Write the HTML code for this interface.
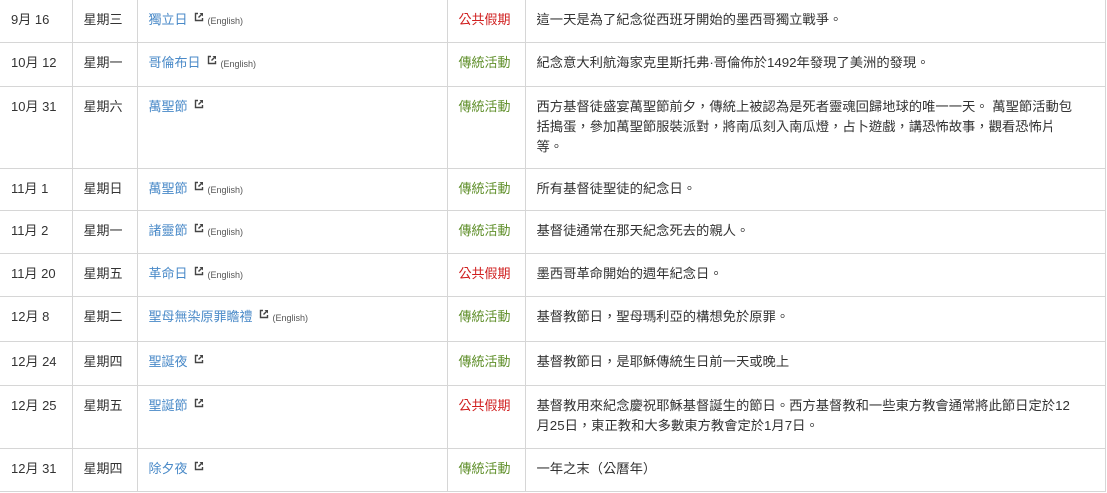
<!DOCTYPE html>
<html><head><meta charset="utf-8"><style>
body{margin:0;background:#fff;width:1107px;height:493px;overflow:hidden;font-family:"Liberation Sans","Noto Sans CJK TC",sans-serif;font-size:13px;color:#333}
table{border-collapse:collapse;position:absolute;left:0;top:-1px;table-layout:fixed;width:1105px}
td{border:1px solid #d6d6d6;padding:10px 11px 0 11px;vertical-align:top;line-height:20px;box-sizing:border-box}
td:first-child{border-left:none}
td:last-child{padding-right:26px;font-size:13.3px}
a{color:#4a8ac8;text-decoration:none}
svg.ext{width:10px;height:10px;margin-left:6px;vertical-align:2px}
.en{font-size:9px;color:#555;margin-left:4px}
.r{color:#d02020}.g{color:#5f8f2a}
</style></head><body>
<svg width="0" height="0" style="position:absolute"><defs><symbol id="e" viewBox="0 0 10 10"><path d="M4 1.5H1.5V8.5H8.5V6" fill="none" stroke="#444" stroke-width="1.4"/><path d="M5.5 1H9V4.5Z" fill="#444"/><path d="M8.5 1.5L4.5 5.5" stroke="#444" stroke-width="1.4"/></symbol></defs></svg>
<table>
<colgroup><col style="width:72px"><col style="width:65px"><col style="width:310px"><col style="width:78px"><col style="width:580px"></colgroup>
<tr style="height:43px"><td>9月 16</td><td>星期三</td><td><a>獨立日</a><svg class="ext"><use href="#e"/></svg><span class="en">(English)</span></td><td class="r">公共假期</td><td>這一天是為了紀念從西班牙開始的墨西哥獨立戰爭。</td></tr>
<tr style="height:44px"><td>10月 12</td><td>星期一</td><td><a>哥倫布日</a><svg class="ext"><use href="#e"/></svg><span class="en">(English)</span></td><td class="g">傳統活動</td><td>紀念意大利航海家克里斯托弗·哥倫佈於1492年發現了美洲的發現。</td></tr>
<tr style="height:82px"><td>10月 31</td><td>星期六</td><td><a>萬聖節</a><svg class="ext"><use href="#e"/></svg></td><td class="g">傳統活動</td><td>西方基督徒盛宴萬聖節前夕，傳統上被認為是死者靈魂回歸地球的唯一一天。 萬聖節活動包括搗蛋，參加萬聖節服裝派對，將南瓜刻入南瓜燈，占卜遊戲，講恐怖故事，觀看恐怖片等。</td></tr>
<tr style="height:42px"><td>11月 1</td><td>星期日</td><td><a>萬聖節</a><svg class="ext"><use href="#e"/></svg><span class="en">(English)</span></td><td class="g">傳統活動</td><td>所有基督徒聖徒的紀念日。</td></tr>
<tr style="height:43px"><td>11月 2</td><td>星期一</td><td><a>諸靈節</a><svg class="ext"><use href="#e"/></svg><span class="en">(English)</span></td><td class="g">傳統活動</td><td>基督徒通常在那天紀念死去的親人。</td></tr>
<tr style="height:43px"><td>11月 20</td><td>星期五</td><td><a>革命日</a><svg class="ext"><use href="#e"/></svg><span class="en">(English)</span></td><td class="r">公共假期</td><td>墨西哥革命開始的週年紀念日。</td></tr>
<tr style="height:45px"><td>12月 8</td><td>星期二</td><td><a>聖母無染原罪瞻禮</a><svg class="ext"><use href="#e"/></svg><span class="en">(English)</span></td><td class="g">傳統活動</td><td>基督教節日，聖母瑪利亞的構想免於原罪。</td></tr>
<tr style="height:44px"><td>12月 24</td><td>星期四</td><td><a>聖誕夜</a><svg class="ext"><use href="#e"/></svg></td><td class="g">傳統活動</td><td>基督教節日，是耶穌傳統生日前一天或晚上</td></tr>
<tr style="height:63px"><td>12月 25</td><td>星期五</td><td><a>聖誕節</a><svg class="ext"><use href="#e"/></svg></td><td class="r">公共假期</td><td>基督教用來紀念慶祝耶穌基督誕生的節日。西方基督教和一些東方教會通常將此節日定於12月25日，東正教和大多數東方教會定於1月7日。</td></tr>
<tr style="height:43px"><td>12月 31</td><td>星期四</td><td><a>除夕夜</a><svg class="ext"><use href="#e"/></svg></td><td class="g">傳統活動</td><td>一年之末（公曆年）</td></tr>
</table>
</body></html>
